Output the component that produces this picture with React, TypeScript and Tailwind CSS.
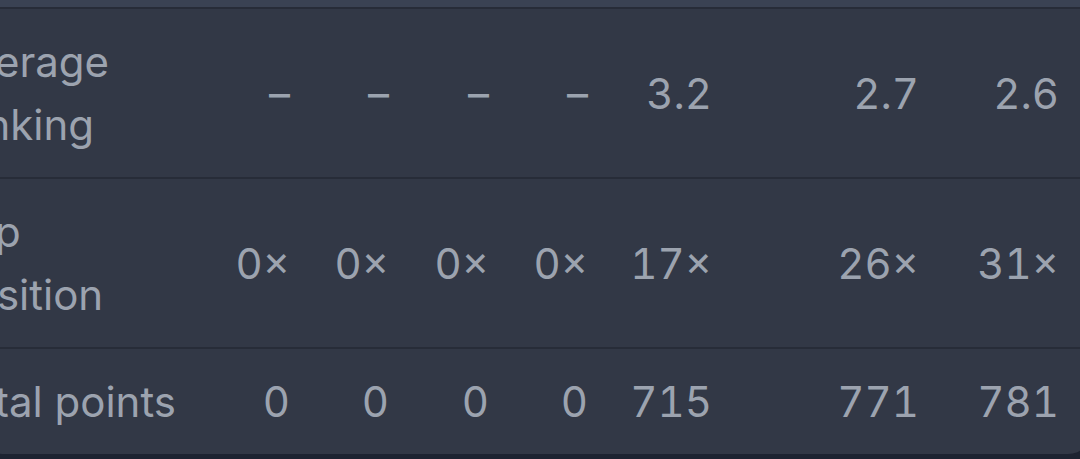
const columns = ['w-[99px]', 'w-[99px]', 'w-[100px]', 'w-[99px]', 'w-[124px]', 'w-[207px]', 'w-[140px]'];

const rows = [
  { label: 'Average ranking', values: ['–', '–', '–', '–', '3.2', '2.7', '2.6'] },
  { label: 'Top position', values: ['0×', '0×', '0×', '0×', '17×', '26×', '31×'] },
  { label: 'Total points', values: ['0', '0', '0', '0', '715', '771', '781'] },
];

export default function App() {
  return (
    <div className="w-[1080px] h-[459px] overflow-hidden bg-[#1d2331] font-['Inter',sans-serif]">
      <div className="-ml-[20px] w-[1112px] rounded-b-[24px] overflow-hidden bg-[#323846]">
        <div className="h-[9px] bg-[#3a4253] border-b-2 border-[#272c38]" />
        {rows.map((row, i) => (
          <div
            key={row.label}
            className={`flex items-center py-[21px] text-[42px] leading-[63px] text-[#9ca3af] ${
              i < rows.length - 1 ? 'border-b-2 border-[#272c38]' : ''
            }`}
          >
            <div className="ml-[-34px] mr-[15px] w-[230px] shrink-0">{row.label}</div>
            {row.values.map((v, j) => (
              <div key={j} className={`${columns[j]} shrink-0 text-right tabular-nums`}>
                {v}
              </div>
            ))}
          </div>
        ))}
      </div>
    </div>
  );
}
